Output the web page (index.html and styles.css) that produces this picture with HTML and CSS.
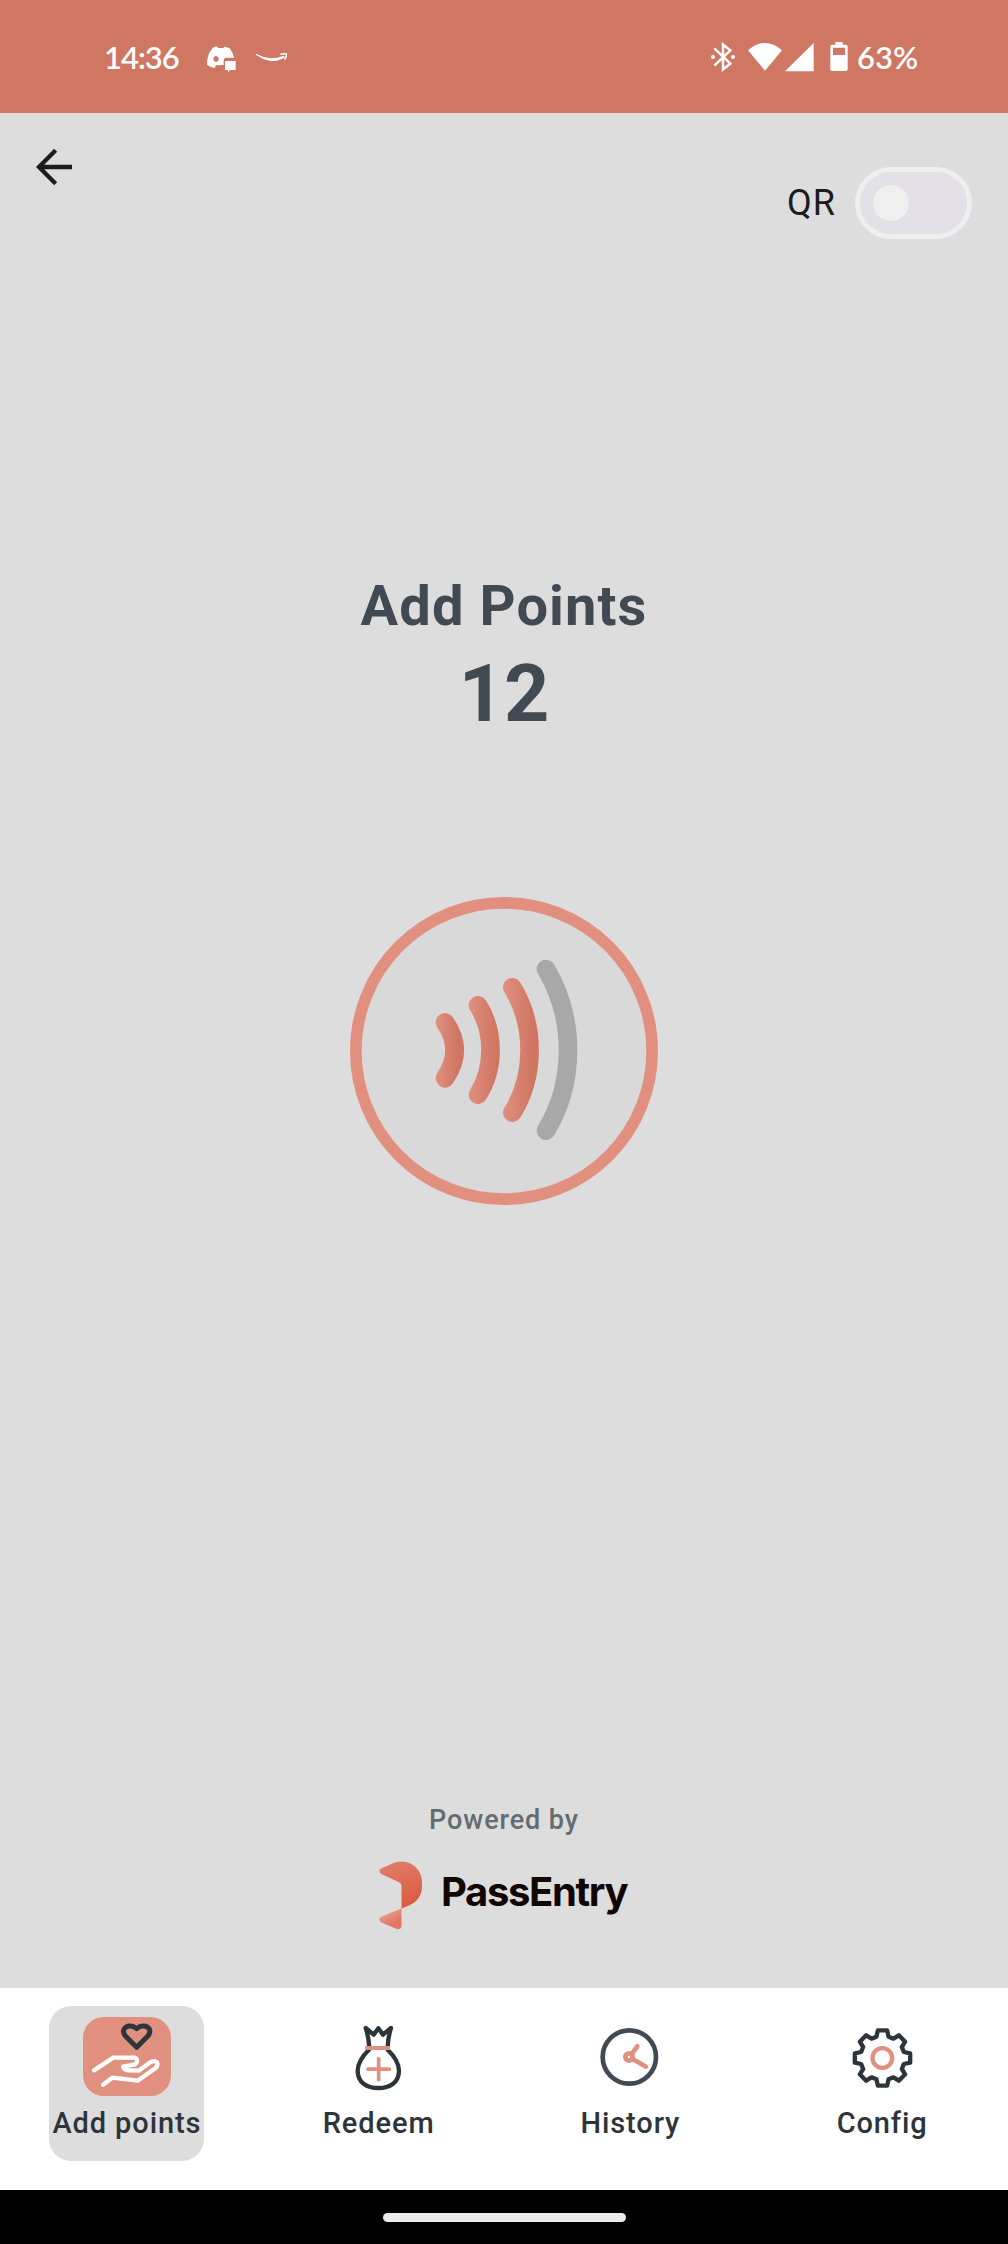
FILE: index.html
```html
<!DOCTYPE html>
<html lang="en">
<head>
  <meta charset="UTF-8" />
  <meta name="viewport" content="width=device-width, initial-scale=1" />
  <title>PassEntry - Add Points</title>
  <link rel="stylesheet" href="styles.css">
</head>
<body>
  <div class="status-bar">
    <span class="clock">14:36</span>
    <svg class="status-left" viewBox="375 0 255 240" aria-hidden="true">
      <path fill="#fff" fill-rule="evenodd" d="M398 84 Q406 79 412 80 L415 84 H430 L433 80 Q441 80 449 85 Q459 98 462 113 H438 Q431 114 431 123 V135 L408 136 L404 144 Q391 142 381 134 Q380 104 398 84 Z M408 108 a8 9 0 1 0 .1 0 Z" />
      <path fill="#fff" d="M437 123 H467 V150 H450 L444 157 V150 H435 V125 Z" />
      <path fill="#fff" stroke="#fff" stroke-width="3" stroke-linejoin="round" d="M528 103 Q572 126 611 109 L613 112 Q573 136 528 103 Z" />
      <path fill="none" stroke="#fff" stroke-width="4.500" stroke-linecap="round" stroke-linejoin="round" d="M603 103 Q613 100 619 102 Q620 110 615 117" />
    </svg>
    <svg class="status-right" viewBox="60 0 420 240" aria-hidden="true">
      <g fill="none" stroke="#fff" stroke-width="7.500">
        <path d="M73 85 L121 131 L99 148 V74 L121 91 L73 137" />
      </g>
      <circle cx="69" cy="111" r="6" fill="#fff" />
      <circle cx="129" cy="111" r="6" fill="#fff" />
      <path fill="#fff" d="M174 91 Q198 69 225 69 Q252 69 276 91 L225 152 Z" />
      <path fill="#fff" d="M371 69 V154 H285 Z" />
      <path fill="#fff" fill-rule="evenodd" d="M436 66 H458 V74 H468 Q473 74 473 79 V148 Q473 153 468 153 H426 Q421 153 421 148 V79 Q421 74 426 74 H436 Z M429 83 V105 H465 V83 Z" />
    </svg>
    <span class="battery">63%</span>
  </div>

  <main>
    <header>
      <svg class="back" viewBox="108 147 108 108" aria-label="Back">
        <path fill="none" stroke="#1c1b1f" stroke-width="13" d="M216 201 H120 M167 151 L117 201 L167 251" />
      </svg>
      <div class="qr">
        <span class="qr-label">QR</span>
        <div class="toggle"><div class="knob"></div></div>
      </div>
    </header>

    <h1>Add Points</h1>
    <div class="points">12</div>

    <svg class="scanner" viewBox="60 51 924 924" aria-hidden="true">
      <defs>
        <linearGradient id="g1" gradientUnits="userSpaceOnUse" x1="316" x2="402" y1="0" y2="0"><stop offset="0" stop-color="#e19080" /><stop offset=".75" stop-color="#cf7763" /></linearGradient>
        <linearGradient id="g2" gradientUnits="userSpaceOnUse" x1="416" x2="510" y1="0" y2="0"><stop offset="0" stop-color="#e19080" /><stop offset=".8" stop-color="#cf7763" /></linearGradient>
        <linearGradient id="g3" gradientUnits="userSpaceOnUse" x1="518" x2="626" y1="0" y2="0"><stop offset="0" stop-color="#e19080" /><stop offset=".8" stop-color="#cf7763" /></linearGradient>
      </defs>
      <circle cx="522" cy="513" r="444.5" fill="#d9d9d9" stroke="#e19080" stroke-width="35" />
      <g fill="none" stroke-width="56" stroke-linecap="round">
        <path stroke="url(#g1)" d="M345 427 Q403 509 345 595" />
        <path stroke="url(#g2)" d="M444 376 C494 454 494 566 444 644" />
        <path stroke="url(#g3)" d="M547 322 C616 435 616 586 547 698" />
        <path stroke="#a8a8a8" d="M648 267 C736 415 736 608 648 752" />
      </g>
    </svg>

    <div class="powered">Powered by</div>
    <div class="brand">
      <svg class="brand-mark" viewBox="56 212 130 206" aria-hidden="true">
        <defs>
          <linearGradient id="m1" x1="0" y1="0" x2=".3" y2="1"><stop offset="0" stop-color="#e17f6c" /><stop offset="1" stop-color="#dc5c42" /></linearGradient>
          <linearGradient id="m2" x1="0" y1="0" x2=".6" y2="1"><stop offset=".2" stop-color="#e5a295" /><stop offset=".8" stop-color="#e17664" /></linearGradient>
        </defs>
        <path fill="url(#m1)" d="M62 233 L104 215 Q113 212 125 212 C160 213 186 241 186 274 V291 C186 314 170 336 147 345 L124 354 V286 Q124 278 117 275 L63 250 Q52 241 62 233 Z" />
        <path fill="url(#m2)" d="M124 354 V407 Q122 419 110 416 L62 396 Q52 388 61 380 Z" />
      </svg>
      <span class="brand-name">PassEntry</span>
    </div>
  </main>

  <nav>
    <div class="tab active">
      <svg viewBox="159 111 264 237" aria-hidden="true">
        <rect x="159" y="111" width="264" height="237" rx="62" fill="#e19080" />
        <path fill="none" stroke="#2d353b" stroke-width="15" stroke-linejoin="round" d="M320 202 L287 169 C272 150 287 137 301 138 Q311 138 320 146 Q329 138 339 138 C354 137 368 150 353 169 Z" />
        <path fill="none" stroke="#fff" stroke-width="13" stroke-linecap="round" stroke-linejoin="round" d="M192 271 L250 233 H314 Q324 236 320 248 L315 253 L279 260 Q284 272 298 271 L326 272 L361 247 Q374 240 381 247 Q385 257 376 265 L323 302 L247 293 L219 314" />
      </svg>
      <span>Add points</span>
    </div>
    <div class="tab">
      <svg viewBox="104 111 264 237" aria-hidden="true">
        <g fill="none" stroke="#2d353b" stroke-width="13" stroke-linejoin="round">
          <path d="M207 202 Q205 170 196 144 L220 164 L234 145 L248 164 L272 144 Q263 170 262 202" />
          <path d="M208 207 Q172 242 172 272 C172 309 201 324 234 324 C267 324 296 309 296 272 Q296 242 260 207" />
        </g>
        <path fill="none" stroke="#e19080" stroke-width="12" d="M195 204 H269" />
        <path fill="none" stroke="#e19080" stroke-width="11" stroke-linecap="round" d="M203 267.500 H267 M235 236 V299" />
      </svg>
      <span>Redeem</span>
    </div>
    <div class="tab">
      <svg viewBox="79 111 264 237" aria-hidden="true">
        <circle cx="209" cy="231" r="80" fill="none" stroke="#414a52" stroke-width="14" />
        <g fill="none" stroke="#e19080" stroke-linecap="round">
          <circle cx="208" cy="231" r="11" stroke-width="14" />
          <path stroke-width="14" d="M217 221 L233 199 M219 237 L259 260" />
        </g>
      </svg>
      <span>History</span>
    </div>
    <div class="tab">
      <svg viewBox="84 111 264 237" aria-hidden="true">
        <path transform="translate(217.500 234)" fill="none" stroke="#2d353b" stroke-width="13" stroke-linejoin="round" d="M-14 -83 H14 L18 -64 L33 -58 L49 -68 L68 -49 L58 -33 L64 -18 L83 -14 V14 L64 18 L58 33 L68 49 L49 68 L33 58 L18 64 L14 83 H-14 L-18 64 L-33 58 L-49 68 L-68 49 L-58 33 L-64 18 L-83 14 V-14 L-64 -18 L-58 -33 L-68 -49 L-49 -68 L-33 -58 L-18 -64 Z" />
        <circle cx="217" cy="234" r="29.500" fill="none" stroke="#e19080" stroke-width="13" />
      </svg>
      <span>Config</span>
    </div>
  </nav>

  <div class="home-bar"><div class="home-pill"></div></div>
</body>
</html>
```

FILE: styles.css
```css
* {
  box-sizing: border-box;
}

body {
  margin: 0;
  width: 1008px;
  height: 2244px;
  display: flex;
  flex-direction: column;
  background: #ddd;
  font-family: Roboto, sans-serif;
  color: #2d353b;
}

svg {
  display: block;
  flex: none;
}

.status-bar {
  height: 113px;
  padding: 0 88px 0 104px;
  display: flex;
  align-items: flex-start;
  background: #cf7763;
  color: #fff;
  font-family: Lato, sans-serif;
  font-size: 31px;
  font-weight: 600;
  line-height: 38px;
}

.clock,
.battery {
  margin-top: 38px;
  white-space: nowrap;
}

.clock {
  width: 101px;
  letter-spacing: -1px;
}

.status-left {
  width: 85px;
  height: 80px;
  margin-top: 20px;
}

.status-right {
  width: 140px;
  height: 80px;
  margin: 20px 7px 0 auto;
}

.battery {
  width: 63px;
}

main {
  height: 1875px;
  display: flex;
  flex-direction: column;
  align-items: center;
}

header {
  width: 100%;
  height: 126px;
  padding: 36px 36px 0;
  display: flex;
  align-items: flex-start;
  justify-content: space-between;
}

.back {
  width: 36px;
  height: 36px;
}

.qr {
  display: flex;
  align-items: center;
  gap: 19px;
  margin-top: 18px;
}

.qr-label {
  color: #1c1b1f;
  font-size: 36px;
  letter-spacing: 1px;
}

.toggle {
  width: 117px;
  height: 72px;
  padding: 0 13px;
  display: flex;
  align-items: center;
  border: 5px solid #efefef;
  border-radius: 36px;
  background: #e3e0e8;
}

.knob {
  width: 36px;
  height: 36px;
  border-radius: 50%;
  background: #efefef;
}

h1 {
  margin: 334px 0 0;
  color: #414a52;
  font-size: 56px;
  font-weight: 700;
  line-height: 66px;
  letter-spacing: 1.1px;
}

.points {
  margin-top: 9px;
  color: #414a52;
  font-size: 79px;
  font-weight: 700;
  line-height: 92px;
}

.scanner {
  width: 308px;
  height: 308px;
  margin-top: 157px;
}

.powered {
  margin-top: 600px;
  color: #646c73;
  font-size: 27px;
  font-weight: 500;
  line-height: 30px;
  letter-spacing: 0.9px;
}

.brand {
  display: flex;
  align-items: center;
  gap: 19px;
  margin-top: 26px;
}

.brand-mark {
  width: 43px;
  height: 69px;
}

.brand-name {
  width: 188px;
  margin-top: -8px;
  color: #120604;
  font-family: Inter, sans-serif;
  font-size: 40px;
  font-weight: 700;
  line-height: 48px;
  letter-spacing: -1.35px;
}

nav {
  height: 202px;
  padding: 18px 0 0 1px;
  display: grid;
  grid-template-columns: repeat(4, 1fr);
  justify-items: center;
  align-items: start;
  background: #fff;
}

.tab {
  width: 155px;
  height: 155px;
  padding-top: 11px;
  display: flex;
  flex-direction: column;
  align-items: center;
  border-radius: 22px;
  font-size: 29px;
  font-weight: 500;
  line-height: 34px;
  letter-spacing: 0.9px;
  white-space: nowrap;
}

.tab svg {
  width: 88px;
  height: 79px;
}

.tab span {
  margin-top: 10px;
}

.active {
  background: #ddd;
}

.home-bar {
  height: 54px;
  display: flex;
  align-items: center;
  justify-content: center;
  background: #000;
}

.home-pill {
  width: 243px;
  height: 9px;
  border-radius: 5px;
  background: #ececec;
}
```
